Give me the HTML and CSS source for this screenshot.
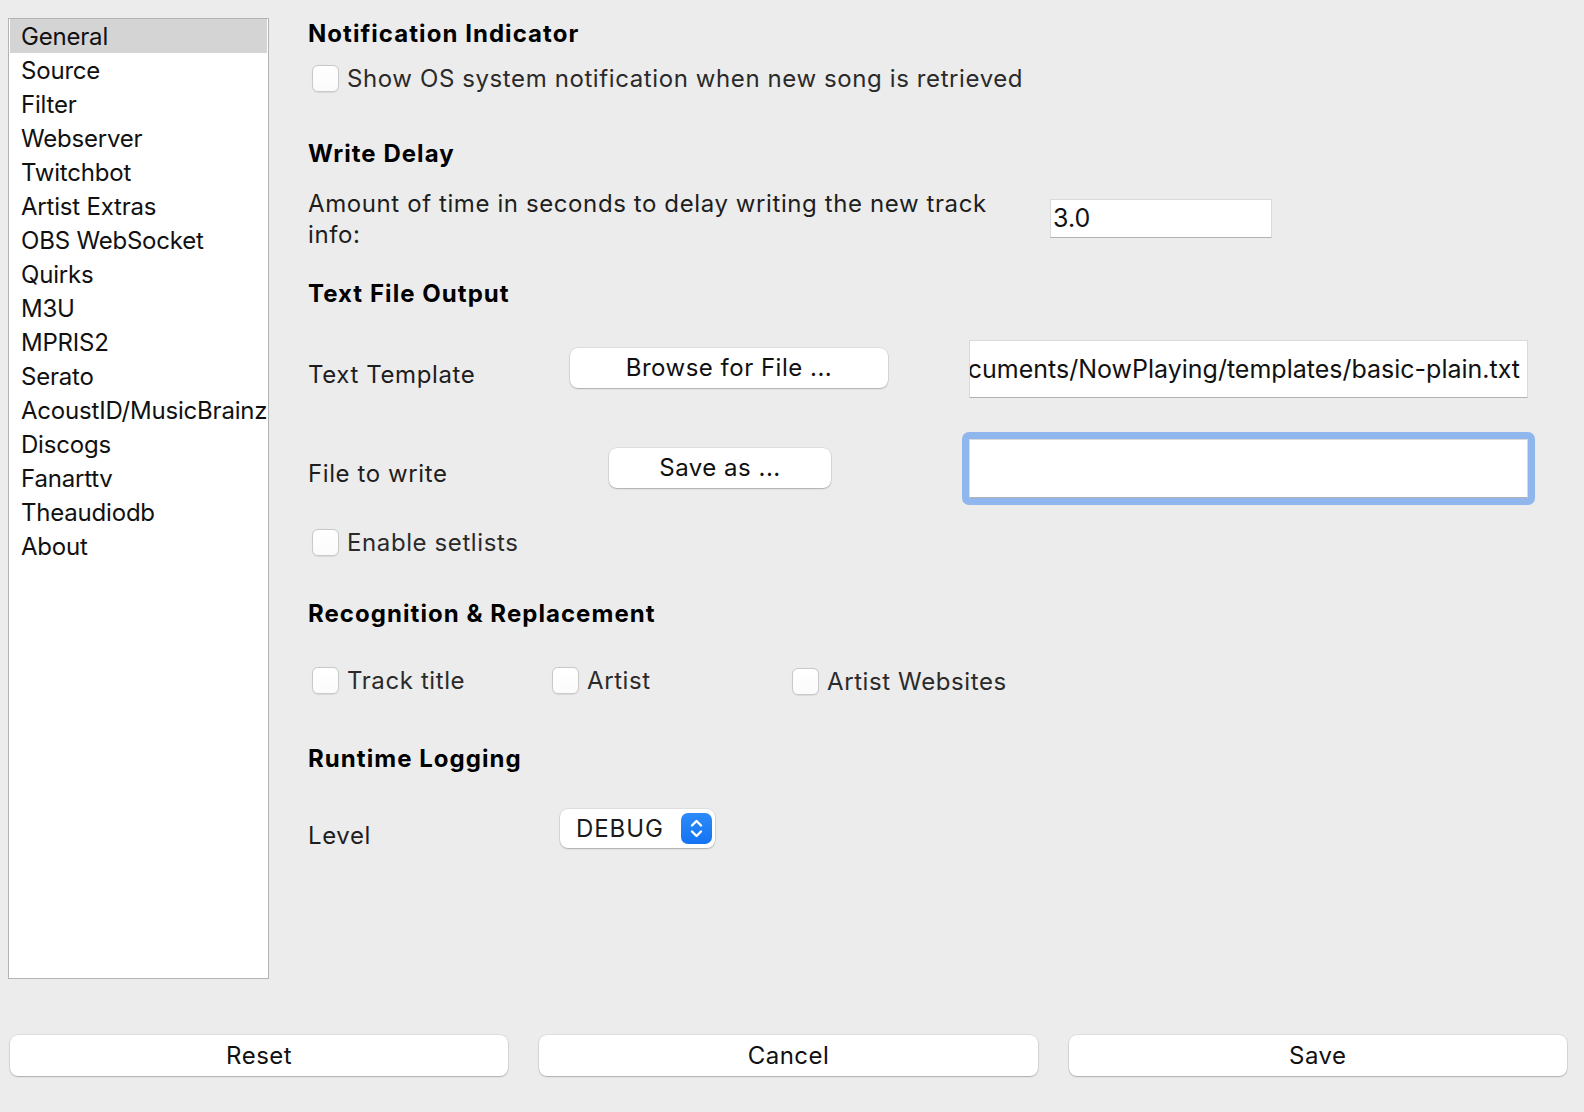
FILE: index.html
```html
<!DOCTYPE html>
<html lang="en">
<head>
<meta charset="utf-8">
<title>Settings</title>
<link rel="stylesheet" href="styles.css">
</head>
<body>
<div class="window">
  <div class="main">
    <ul class="sidebar">
      <li class="selected">General</li>
      <li>Source</li>
      <li>Filter</li>
      <li>Webserver</li>
      <li>Twitchbot</li>
      <li>Artist Extras</li>
      <li>OBS WebSocket</li>
      <li>Quirks</li>
      <li>M3U</li>
      <li>MPRIS2</li>
      <li>Serato</li>
      <li>AcoustID/MusicBrainz</li>
      <li>Discogs</li>
      <li>Fanarttv</li>
      <li>Theaudiodb</li>
      <li>About</li>
    </ul>
    <div class="content">
      <h2 class="heading h-notify">Notification Indicator</h2>
      <label class="check check-notify"><span class="box"></span><span class="check-text">Show OS system notification when new song is retrieved</span></label>

      <h2 class="heading h-delay">Write Delay</h2>
      <div class="delay-row">
        <div class="delay-label">Amount of time in seconds to delay writing the new track info:</div>
        <div class="field field-delay">3.0</div>
      </div>

      <h2 class="heading h-output">Text File Output</h2>
      <div class="form-row template-row">
        <div class="row-label label-template">Text Template</div>
        <button class="btn btn-browse">Browse for File ...</button>
        <div class="field field-path"><span>cuments/NowPlaying/templates/basic-plain.txt</span></div>
      </div>
      <div class="form-row file-row">
        <div class="row-label label-file">File to write</div>
        <button class="btn btn-saveas">Save as ...</button>
        <div class="focus-ring"><div class="field field-write"></div></div>
      </div>
      <label class="check check-setlists"><span class="box"></span><span class="check-text">Enable setlists</span></label>

      <h2 class="heading h-recog">Recognition &amp; Replacement</h2>
      <div class="recog-row">
        <label class="check check-col"><span class="box"></span><span class="check-text">Track title</span></label>
        <label class="check check-col"><span class="box"></span><span class="check-text">Artist</span></label>
        <label class="check check-col check-web"><span class="box"></span><span class="check-text">Artist Websites</span></label>
      </div>

      <h2 class="heading h-log">Runtime Logging</h2>
      <div class="form-row level-row">
        <div class="row-label label-level">Level</div>
        <div class="combo">
          <span class="combo-text">DEBUG</span>
          <span class="stepper">
            <svg width="31" height="31" viewBox="0 0 31 31" aria-hidden="true">
              <path d="M11 12.5 L15.5 8 L20 12.5" fill="none" stroke="#fff" stroke-width="2.4" stroke-linecap="round" stroke-linejoin="round"/>
              <path d="M11 18.5 L15.5 23 L20 18.5" fill="none" stroke="#fff" stroke-width="2.4" stroke-linecap="round" stroke-linejoin="round"/>
            </svg>
          </span>
        </div>
      </div>
    </div>
  </div>
  <div class="footer">
    <button class="btn btn-footer">Reset</button>
    <button class="btn btn-footer">Cancel</button>
    <button class="btn btn-footer">Save</button>
  </div>
</div>
</body>
</html>
```

FILE: styles.css
```css
* { box-sizing: border-box; }
html, body { margin: 0; padding: 0; }
body {
  width: 1584px;
  height: 1112px;
  overflow: hidden;
  background: #ececec;
  font-family: Inter, "Noto Sans", sans-serif;
  font-size: 24px;
  color: #1e1e1e;
}
.window { display: flex; flex-direction: column; height: 100%; }
.main { display: flex; align-items: flex-start; }

.sidebar {
  list-style: none;
  margin: 18px 0 0 8px;
  padding: 0 1px 0 1px;
  width: 261px;
  height: 961px;
  background: #fff;
  border: 1px solid #b3b3b3;
  letter-spacing: -0.2px;
}
.sidebar li {
  height: 34px;
  padding-top: 2px;
  line-height: 32px;
  padding-left: 11px;
  white-space: nowrap;
  color: #111;
}
.sidebar li.selected { background: #d4d4d4; }

.content {
  flex: 1;
  padding-left: 39px;
  display: flex;
  flex-direction: column;
  align-items: flex-start;
  letter-spacing: 0.6px;
}
.heading {
  margin: 0;
  font-size: 24px;
  font-weight: 700;
  height: 30px;
  padding-top: 1px;
  line-height: 30px;
  color: #000;
  letter-spacing: 1.05px;
}
.h-notify { margin-top: 18px; }
.h-delay { margin-top: 45px; }
.h-output { margin-top: 28px; }
.h-recog { margin-top: 41px; }
.h-log { margin-top: 47px; }

.check {
  display: flex;
  align-items: center;
  height: 30px;
  color: #2a2a2a;
}
.check-text { height: 30px; line-height: 30px; padding-top: 1px; }
.box {
  width: 27px;
  height: 27px;
  margin-left: 4px;
  margin-right: 8px;
  border: 1px solid #c9c9c9;
  border-radius: 6px;
  background: linear-gradient(#ffffff, #fbfbfb);
  box-shadow: 0 0.5px 1px rgba(0,0,0,0.08);
  flex: none;
}
.check-notify { margin-top: 15px; }
.check-setlists { margin-top: 22px; }

.delay-row { display: flex; align-items: flex-start; margin-top: 20px; }
.delay-label { width: 700px; line-height: 31px; color: #1e1e1e; }

.field {
  background: #fff;
  border: 1px solid #dadada;
  border-bottom-color: #b2b2b2;
  font-size: 25px;
  color: #111;
  letter-spacing: 0;
}
.field-delay {
  margin-left: 42px;
  margin-top: 11px;
  width: 222px;
  height: 39px;
  line-height: 37px;
  padding-left: 2px;
}

.form-row { display: flex; align-items: flex-start; }
.row-label { height: 30px; line-height: 30px; padding-top: 1px; color: #1e1e1e; }
.template-row { margin-top: 32px; height: 58px; }
.label-template { width: 262px; margin-top: 19px; }
.file-row { margin-top: 34px; height: 73px; }
.label-file { width: 301px; margin-top: 26px; }
.level-row { margin-top: 36px; }
.label-level { width: 252px; margin-top: 11px; }

.btn {
  font-family: inherit;
  font-size: 24px;
  letter-spacing: 0.5px;
  color: #111;
  background: #fff;
  border: none;
  border-radius: 8px;
  box-shadow: 0 0 0 0.5px rgba(0,0,0,0.12), 0 1px 1.5px rgba(0,0,0,0.22);
  height: 40px;
  padding: 0;
  line-height: 40px;
  text-align: center;
}
.btn-browse { width: 318px; margin-top: 8px; }
.btn-saveas { width: 222px; margin-top: 16px; }

.field-path {
  margin-left: 81px;
  width: 559px;
  height: 58px;
  display: flex;
  justify-content: flex-end;
  align-items: center;
  overflow: hidden;
  white-space: nowrap;
  padding-right: 7px;
}
.field-path span { flex: none; }

.focus-ring {
  margin-left: 131px;
  padding: 7px;
  border-radius: 7px;
  background: #8fb7ed;
}
.field-write { width: 559px; height: 59px; }

.recog-row { display: flex; margin-top: 37px; }
.check-col { width: 240px; }
.check-web { margin-top: 1px; }

.combo {
  width: 155px;
  height: 39px;
  background: #fff;
  border-radius: 8px;
  box-shadow: 0 0 0 0.5px rgba(0,0,0,0.12), 0 1px 1.5px rgba(0,0,0,0.22);
  display: flex;
  align-items: center;
  justify-content: space-between;
  padding: 0 3px 0 16px;
}
.combo-text { color: #1a1a1a; line-height: 39px; letter-spacing: 0.9px; }
.stepper {
  width: 31px;
  height: 31px;
  border-radius: 7px;
  background: linear-gradient(#2d8bf9, #1473f2);
  display: flex;
}

.footer {
  display: grid;
  grid-template-columns: 1fr 1fr 1fr;
  column-gap: 31px;
  padding: 0 17px 0 10px;
  margin-top: 56px;
}
.btn-footer { height: 41px; line-height: 41px; width: 100%; }
```
